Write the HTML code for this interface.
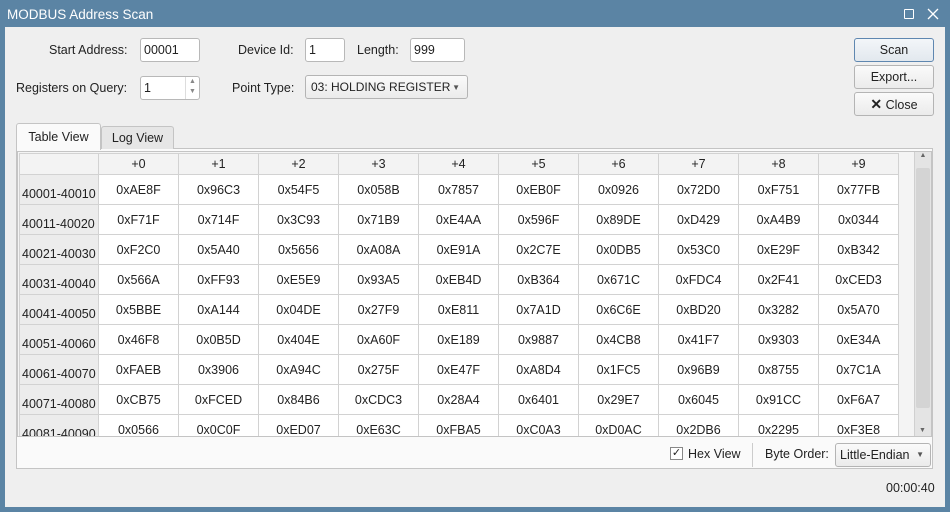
<!DOCTYPE html><html><head><style>
*{box-sizing:border-box;margin:0;padding:0}
body{width:950px;height:512px;background:#5b84a4;font-family:"Liberation Sans",sans-serif;font-size:12.5px;color:#222;position:relative;overflow:hidden}
.a{position:absolute}
.win{left:5px;top:27px;width:940px;height:480px;background:#efefef}
.in{background:#fff;border:1px solid #b8b8b8;border-radius:3px;height:24px;padding:4px 3px;line-height:14px}
.btn{background:linear-gradient(#fafafa,#ebebeb);border:1px solid #b4b4b4;border-radius:3px;text-align:center;line-height:22px;height:24px}
.lbl{line-height:24px}
table{border-collapse:collapse;table-layout:fixed}
td,th{border:1px solid #d2d2d2;text-align:center;font-weight:normal;overflow:hidden;white-space:nowrap}
th{background:#f3f3f3;height:21px}
td{height:30px;background:#fff}
td.r{background:#ececec;text-align:left;padding-left:2px;padding-top:8px}
</style></head><body>
<div class="a" style="left:7px;top:7px;color:#fff;font-size:13.5px">MODBUS Address Scan</div>
<div class="a" style="left:904px;top:9px;width:10px;height:10px;border:1px solid #fff;border-radius:1px"></div>
<svg class="a" style="left:927px;top:8px" width="12" height="12"><path d="M1 1L11 11M11 1L1 11" stroke="#fff" stroke-width="1.3"/></svg>
<div class="a win"></div>
<div class="a lbl" style="left:49px;top:38px">Start Address:</div>
<div class="a in" style="left:140px;top:38px;width:60px">00001</div>
<div class="a lbl" style="left:238px;top:38px">Device Id:</div>
<div class="a in" style="left:305px;top:38px;width:40px">1</div>
<div class="a lbl" style="left:357px;top:38px">Length:</div>
<div class="a in" style="left:410px;top:38px;width:55px">999</div>
<div class="a lbl" style="left:16px;top:76px">Registers on Query:</div>
<div class="a in" style="left:140px;top:76px;width:60px">1</div>
<div class="a" style="left:185px;top:77px;width:14px;height:22px;border-left:1px solid #ddd;font-size:7px;color:#888;line-height:10px;text-align:center">▲<br>▼</div>
<div class="a lbl" style="left:232px;top:76px">Point Type:</div>
<div class="a btn" style="left:305px;top:75px;width:163px;text-align:left;padding-left:5px;line-height:23px;font-size:12px">03: HOLDING REGISTER<span style="position:absolute;right:7px;font-size:8px;color:#555">▼</span></div>
<div class="a btn" style="left:854px;top:38px;width:80px;border-color:#5f87b0;background:linear-gradient(#f3f6f9,#e2e8ee)">Scan</div>
<div class="a btn" style="left:854px;top:65px;width:80px">Export...</div>
<div class="a btn" style="left:854px;top:92px;width:80px"><b style="font-size:14px">✕</b> Close</div>
<div class="a" style="left:16px;top:148px;width:917px;height:321px;background:#fafafa;border:1px solid #c4c4c4"></div>
<div class="a" style="left:16px;top:123px;width:85px;height:27px;background:#fafafa;border:1px solid #c4c4c4;border-bottom:none;border-radius:3px 3px 0 0;line-height:26px;text-align:center">Table View</div>
<div class="a" style="left:101px;top:126px;width:73px;height:23px;background:#e6e6e6;border:1px solid #c4c4c4;border-bottom:none;border-radius:3px 3px 0 0;line-height:22px;text-align:center">Log View</div>
<div class="a" style="left:17px;top:151px;width:915px;height:286px;border:1px solid #c4c4c4;background:#f4f4f4;overflow:hidden">
<table style="position:absolute;left:1px;top:1px;width:879px">
<colgroup><col style="width:79px"><col span="10" style="width:80px"></colgroup>
<tr><th></th><th>+0</th><th>+1</th><th>+2</th><th>+3</th><th>+4</th><th>+5</th><th>+6</th><th>+7</th><th>+8</th><th>+9</th></tr>
<tr><td class="r">40001-40010</td><td>0xAE8F</td><td>0x96C3</td><td>0x54F5</td><td>0x058B</td><td>0x7857</td><td>0xEB0F</td><td>0x0926</td><td>0x72D0</td><td>0xF751</td><td>0x77FB</td></tr>
<tr><td class="r">40011-40020</td><td>0xF71F</td><td>0x714F</td><td>0x3C93</td><td>0x71B9</td><td>0xE4AA</td><td>0x596F</td><td>0x89DE</td><td>0xD429</td><td>0xA4B9</td><td>0x0344</td></tr>
<tr><td class="r">40021-40030</td><td>0xF2C0</td><td>0x5A40</td><td>0x5656</td><td>0xA08A</td><td>0xE91A</td><td>0x2C7E</td><td>0x0DB5</td><td>0x53C0</td><td>0xE29F</td><td>0xB342</td></tr>
<tr><td class="r">40031-40040</td><td>0x566A</td><td>0xFF93</td><td>0xE5E9</td><td>0x93A5</td><td>0xEB4D</td><td>0xB364</td><td>0x671C</td><td>0xFDC4</td><td>0x2F41</td><td>0xCED3</td></tr>
<tr><td class="r">40041-40050</td><td>0x5BBE</td><td>0xA144</td><td>0x04DE</td><td>0x27F9</td><td>0xE811</td><td>0x7A1D</td><td>0x6C6E</td><td>0xBD20</td><td>0x3282</td><td>0x5A70</td></tr>
<tr><td class="r">40051-40060</td><td>0x46F8</td><td>0x0B5D</td><td>0x404E</td><td>0xA60F</td><td>0xE189</td><td>0x9887</td><td>0x4CB8</td><td>0x41F7</td><td>0x9303</td><td>0xE34A</td></tr>
<tr><td class="r">40061-40070</td><td>0xFAEB</td><td>0x3906</td><td>0xA94C</td><td>0x275F</td><td>0xE47F</td><td>0xA8D4</td><td>0x1FC5</td><td>0x96B9</td><td>0x8755</td><td>0x7C1A</td></tr>
<tr><td class="r">40071-40080</td><td>0xCB75</td><td>0xFCED</td><td>0x84B6</td><td>0xCDC3</td><td>0x28A4</td><td>0x6401</td><td>0x29E7</td><td>0x6045</td><td>0x91CC</td><td>0xF6A7</td></tr>
<tr><td class="r">40081-40090</td><td>0x0566</td><td>0x0C0F</td><td>0xED07</td><td>0xE63C</td><td>0xFBA5</td><td>0xC0A3</td><td>0xD0AC</td><td>0x2DB6</td><td>0x2295</td><td>0xF3E8</td></tr>
</table>
<div class="a" style="left:896px;top:0;width:17px;height:284px;background:#e4e4e4;border-left:1px solid #d0d0d0;font-size:7px;color:#666;text-align:center">▲<div class="a" style="left:1px;top:16px;width:14px;height:240px;background:#d4d4d4;border-radius:2px"></div><div class="a" style="left:4px;bottom:2px">▼</div></div>
</div>
<div class="a" style="left:670px;top:447px;width:13px;height:13px;border:1px solid #888;background:#fff;font-size:11px;line-height:11px;text-align:center">✓</div>
<div class="a" style="left:688px;top:447px">Hex View</div>
<div class="a" style="left:752px;top:443px;width:1px;height:24px;background:#ccc"></div>
<div class="a" style="left:765px;top:447px">Byte Order:</div>
<div class="a btn" style="left:835px;top:443px;width:96px;text-align:left;padding-left:4px">Little-Endian<span style="position:absolute;right:6px;font-size:8px;color:#555">▼</span></div>
<div class="a" style="left:886px;top:481px">00:00:40</div>
</body></html>
